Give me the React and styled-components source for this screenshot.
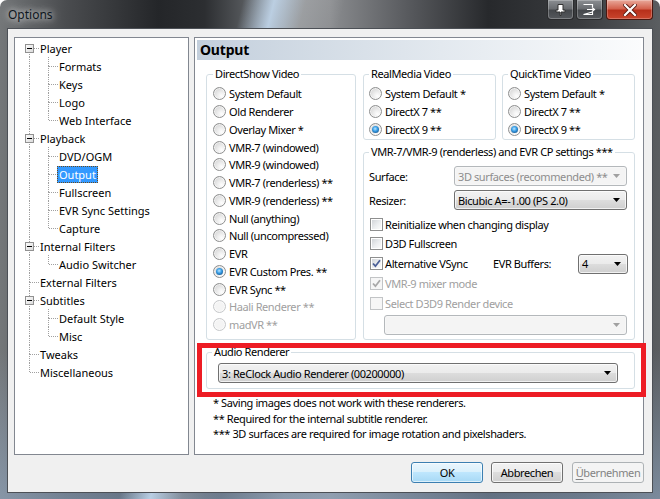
import React from 'react';
import styled, { createGlobalStyle, css } from 'styled-components';

const GlobalStyle = createGlobalStyle`
  * { box-sizing: border-box; }
  html, body { margin: 0; padding: 0; background: #fff; }
  body {
    font-family: "Noto Sans", "DejaVu Sans", sans-serif;
    font-size: 11px;
    color: #000;
  }
`;

const pages = [
  { label: 'Player', children: ['Formats', 'Keys', 'Logo', 'Web Interface'] },
  { label: 'Playback', children: ['DVD/OGM', 'Output', 'Fullscreen', 'EVR Sync Settings', 'Capture'] },
  { label: 'Internal Filters', children: ['Audio Switcher'] },
  { label: 'External Filters' },
  { label: 'Subtitles', children: ['Default Style', 'Misc'] },
  { label: 'Tweaks' },
  { label: 'Miscellaneous' },
];

const directShow = [
  { label: 'System Default' },
  { label: 'Old Renderer' },
  { label: 'Overlay Mixer *' },
  { label: 'VMR-7 (windowed)' },
  { label: 'VMR-9 (windowed)' },
  { label: 'VMR-7 (renderless) **' },
  { label: 'VMR-9 (renderless) **' },
  { label: 'Null (anything)' },
  { label: 'Null (uncompressed)' },
  { label: 'EVR' },
  { label: 'EVR Custom Pres. **', checked: true },
  { label: 'EVR Sync **' },
  { label: 'Haali Renderer **', disabled: true },
  { label: 'madVR **', disabled: true },
];

const dxChoices = [
  { label: 'System Default *' },
  { label: 'DirectX 7 **' },
  { label: 'DirectX 9 **', checked: true },
];

// tree connector: dotted lines + optional expander box
function Connector({ up, down, branch, box }) {
  const dots = { stroke: '#a0a0a0', strokeDasharray: '1 1', shapeRendering: 'crispEdges' };
  return (
    <svg width="19" height="18" viewBox="0 0 19 18" style={{ flex: 'none' }}>
      {up && <line x1="9.5" y1="0" x2="9.5" y2="9" {...dots} />}
      {down && <line x1="9.5" y1="9" x2="9.5" y2="18" {...dots} />}
      {branch && <line x1="10" y1="9.5" x2="19" y2="9.5" {...dots} />}
      {box && (
        <g shapeRendering="crispEdges">
          <defs>
            <linearGradient id="exp" x1="0" y1="0" x2="1" y2="1">
              <stop offset="0" stopColor="#ffffff" />
              <stop offset="1" stopColor="#d8d8d8" />
            </linearGradient>
          </defs>
          <rect x="5.5" y="5.5" width="8" height="8" fill="url(#exp)" stroke="#919191" />
          <line x1="7" y1="9.5" x2="12" y2="9.5" stroke="#000" />
        </g>
      )}
    </svg>
  );
}

function TreeView() {
  return (
    <Tree>
      {pages.map((node, i) => {
        const last = i === pages.length - 1;
        return (
          <React.Fragment key={node.label}>
            <TreeRow>
              <Connector up={i > 0} down={!last} branch box={!!node.children} />
              <TreeLabel>{node.label}</TreeLabel>
            </TreeRow>
            {node.children &&
              node.children.map((child, j) => (
                <TreeRow key={child}>
                  <Connector up down={!last} />
                  <Connector up down={j < node.children.length - 1} branch />
                  <TreeLabel $selected={child === 'Output'}>{child}</TreeLabel>
                </TreeRow>
              ))}
          </React.Fragment>
        );
      })}
    </Tree>
  );
}

function Radio({ label, checked, disabled }) {
  return (
    <Option $disabled={disabled}>
      <RadioMark $checked={checked} $disabled={disabled} />
      {label}
    </Option>
  );
}

function Check({ label, checked, disabled, children }) {
  return (
    <CheckRow $disabled={disabled}>
      <CheckMark $disabled={disabled}>
        {checked && (
          <svg width="9" height="9" viewBox="0 0 9 9">
            <path
              d="M1 4.5 L3.4 7.2 L8 1.2"
              fill="none"
              stroke={disabled ? '#a8a8a8' : '#4a5f97'}
              strokeWidth="1.8"
            />
          </svg>
        )}
      </CheckMark>
      <span>{label}</span>
      {children}
    </CheckRow>
  );
}

function Arrow({ disabled }) {
  return (
    <svg width="7" height="4" viewBox="0 0 7 4" style={{ flex: 'none' }}>
      <polygon points="0,0 7,0 3.5,4" fill={disabled ? '#a0a0a0' : '#000'} />
    </svg>
  );
}

function Combo({ value, width, disabled }) {
  return (
    <ComboBox $w={width} $disabled={disabled}>
      <ComboText>{value}</ComboText>
      <Arrow disabled={disabled} />
    </ComboBox>
  );
}

export default function App() {
  return (
    <>
      <GlobalStyle />
      <Window>
        <TitleBar>
          <Caption>Options</Caption>
          <CaptionButtons>
            <CaptionButton>
              <svg width="11" height="12" viewBox="0 0 11 12">
                <path d="M3 0.5 H8 V6 H10 V8 H6 V11.5 H5 V8 H1 V6 H3 Z" fill="#fff" stroke="#333" strokeWidth="1" />
              </svg>
            </CaptionButton>
            <CaptionButton>
              <svg width="13" height="11" viewBox="0 0 13 11">
                <path d="M0.5 0.5 H9.5 V3 M9.5 8 V10.5 H0.5 Z" fill="none" stroke="#fff" strokeWidth="1.2" />
                <path d="M4 5.5 H11 M9 3.5 L11.5 5.5 L9 7.5" fill="none" stroke="#fff" strokeWidth="1.2" />
              </svg>
            </CaptionButton>
            <CloseButton>
              <svg width="14" height="12" viewBox="0 0 14 12">
                <path d="M2 1 L12 11 M12 1 L2 11" stroke="#5a1a12" strokeWidth="4" strokeLinecap="square" />
                <path d="M2 1 L12 11 M12 1 L2 11" stroke="#fff" strokeWidth="2.2" strokeLinecap="square" />
              </svg>
            </CloseButton>
          </CaptionButtons>
        </TitleBar>

        <Client>
          <Panes>
            <TreeView />
            <Page>
              <PageHeader>Output</PageHeader>
              <PageBody>
                <TopGrid>
                  <Group $pad="4px 0 5px 6px">
                    <Legend>DirectShow Video</Legend>
                    {directShow.map((o) => (
                      <Radio key={o.label} {...o} />
                    ))}
                  </Group>
                  <RightColumn>
                    <Pair>
                      <Group $pad="4px 0 1px 5px">
                        <Legend>RealMedia Video</Legend>
                        {dxChoices.map((o) => (
                          <Radio key={o.label} {...o} />
                        ))}
                      </Group>
                      <Group $pad="4px 0 1px 5px">
                        <Legend>QuickTime Video</Legend>
                        {dxChoices.map((o) => (
                          <Radio key={o.label} {...o} />
                        ))}
                      </Group>
                    </Pair>
                    <Group $pad="7px 6px 4px 5px">
                      <Legend>VMR-7/VMR-9 (renderless) and EVR CP settings ***</Legend>
                      <FieldRow>
                        <FieldLabel>Surface:</FieldLabel>
                        <Combo value="3D surfaces (recommended) **" width="173px" disabled />
                      </FieldRow>
                      <FieldRow $gap="4px">
                        <FieldLabel>Resizer:</FieldLabel>
                        <Combo value="Bicubic A=-1.00 (PS 2.0)" width="173px" />
                      </FieldRow>
                      <Checks>
                        <Check label="Reinitialize when changing display" />
                        <Check label="D3D Fullscreen" />
                        <Check label="Alternative VSync" checked>
                          <BuffersLabel>EVR Buffers:</BuffersLabel>
                          <Combo value="4" width="50px" />
                        </Check>
                        <Check label="VMR-9 mixer mode" checked disabled />
                        <Check label="Select D3D9 Render device" disabled />
                      </Checks>
                      <DeviceRow>
                        <Combo value="" width="243px" disabled />
                      </DeviceRow>
                    </Group>
                  </RightColumn>
                </TopGrid>

                <AudioGroup $pad="4px 15px 5px 5px">
                  <Legend>Audio Renderer</Legend>
                  <AudioCombo>
                    <Combo value="3: ReClock Audio Renderer (00200000)" width="400px" />
                  </AudioCombo>
                </AudioGroup>

                <Notes>
                  <li>* Saving images does not work with these renderers.</li>
                  <li>** Required for the internal subtitle renderer.</li>
                  <li>*** 3D surfaces are required for image rotation and pixelshaders.</li>
                </Notes>
              </PageBody>
            </Page>
          </Panes>

          <ButtonRow>
            <DialogButton $kind="default">
              <span>OK</span>
            </DialogButton>
            <DialogButton>
              <span>Abbrechen</span>
            </DialogButton>
            <DialogButton $kind="disabled">
              <span>
                <u>Ü</u>bernehmen
              </span>
            </DialogButton>
          </ButtonRow>
        </Client>

        <Highlight />
      </Window>
    </>
  );
}

const Window = styled.div`
  position: relative;
  width: 660px;
  height: 499px;
  display: flex;
  flex-direction: column;
  padding: 0 7px 6px 7px;
  border-radius: 7px 7px 0 0;
  overflow: hidden;
  background:
    linear-gradient(104deg, rgba(255, 255, 255, 0) 31%, rgba(200, 222, 244, 0.85) 35%, rgba(255, 255, 255, 0.2) 39%, rgba(255, 255, 255, 0) 44%),
    linear-gradient(to bottom, rgba(0, 0, 0, 0) 70%, rgba(150, 175, 205, 0.55) 100%),
    linear-gradient(to right, #747779 0%, #4a4c4f 10%, #242629 24%, #2c2e31 31%, #7e8286 43%, #8a8c8f 50%, #57595d 62%, #27292c 74%, #3a3c3f 88%, #5b5e61 100%);
`;

const TitleBar = styled.div`
  display: flex;
  height: 28px;
  flex: none;
`;

const Caption = styled.div`
  margin: 7px 0 0 1px;
  font-size: 12px;
  line-height: 16px;
  color: #0d1620;
  text-shadow: 0 0 6px rgba(255, 255, 255, 0.9), 0 0 12px rgba(255, 255, 255, 0.6);
`;

const CaptionButtons = styled.div`
  display: flex;
  margin-left: auto;
  gap: 2px;
`;

const CaptionButton = styled.div`
  width: 27px;
  height: 20px;
  display: grid;
  place-items: center;
  border: 1px solid #2a2b2d;
  border-top: none;
  border-radius: 0 0 4px 4px;
  background: linear-gradient(#8b8e92 0%, #6a6d71 45%, #45484c 55%, #55585c 100%);
  box-shadow: inset 0 0 0 1px rgba(255, 255, 255, 0.25);
`;

const CloseButton = styled(CaptionButton)`
  width: 47px;
  margin-left: 1px;
  background: linear-gradient(#e9a99b 0%, #d4634f 45%, #b8301b 55%, #c9452d 100%);
  border-color: #4a1810;
`;

const Client = styled.div`
  flex: 1;
  display: flex;
  flex-direction: column;
  gap: 7px;
  padding: 8px 8px 9px 6px;
  background: #f0f0f0;
  border: 1px solid #4c5056;
`;

const Panes = styled.div`
  display: flex;
  gap: 5px;
  height: 418px;
`;

const Tree = styled.div`
  width: 175px;
  height: 100%;
  padding: 1px 0 0 5px;
  background: #fff;
  border: 1px solid #828790;
`;

const TreeRow = styled.div`
  display: flex;
  align-items: center;
  height: 18px;
`;

const TreeLabel = styled.span`
  display: flex;
  align-items: center;
  height: 17px;
  margin-left: -1px;
  padding: 0 2px;
  white-space: nowrap;
  ${(p) =>
    p.$selected &&
    css`
      background: #3399ff;
      color: #fff;
      outline: 1px dotted #6b4a1c;
      outline-offset: -1px;
    `}
`;

const Page = styled.div`
  width: 450px;
  height: 100%;
  display: flex;
  flex-direction: column;
  padding: 2px;
  background: #fff;
  border: 1px solid #828790;
  letter-spacing: -0.4px;
`;

const PageHeader = styled.div`
  height: 20px;
  padding-left: 3px;
  font-size: 14px;
  font-weight: 700;
  line-height: 20px;
  letter-spacing: -0.2px;
  background: linear-gradient(to right, #c3cfdc 0%, #e3e9ef 55%, #fbfcfd 100%);
`;

const PageBody = styled.div`
  padding: 7px 6px 0 9px;
`;

const TopGrid = styled.div`
  display: grid;
  grid-template-columns: 150px 272px;
  column-gap: 7px;
`;

const RightColumn = styled.div`
  display: flex;
  flex-direction: column;
  gap: 5px;
`;

const Pair = styled.div`
  display: grid;
  grid-template-columns: 133px 133px;
  column-gap: 6px;
`;

const Group = styled.fieldset`
  margin: 0;
  min-width: 0;
  padding: ${(p) => p.$pad};
  border: 1px solid #d5dfe5;
  border-radius: 3px;
`;

const Legend = styled.legend`
  padding: 0 2px;
  line-height: 14px;
  white-space: nowrap;
`;

const Option = styled.div`
  display: flex;
  align-items: center;
  gap: 3px;
  height: 17.75px;
  white-space: nowrap;
  color: ${(p) => (p.$disabled ? '#a0a0a0' : '#000')};
`;

const RadioMark = styled.span`
  flex: none;
  width: 13px;
  height: 13px;
  display: grid;
  place-items: center;
  border-radius: 50%;
  border: 1px solid ${(p) => (p.$disabled ? '#c6c8ca' : '#8e8f8f')};
  background: ${(p) =>
    p.$disabled
      ? '#f4f4f4'
      : 'radial-gradient(circle at 68% 72%, #fefefe 0%, #f0f0f0 30%, #d3d3d3 85%)'};
  box-shadow: inset 0 0 0 1px ${(p) => (p.$disabled ? '#fafafa' : 'rgba(255,255,255,0.6)')};

  &::after {
    content: '';
    display: ${(p) => (p.$checked ? 'block' : 'none')};
    width: 7px;
    height: 7px;
    border-radius: 50%;
    background: radial-gradient(circle at 45% 40%, #bfe6ff 0%, #3aa0e8 40%, #175a94 80%, #0e3a66 100%);
  }
`;

const FieldRow = styled.div`
  display: flex;
  align-items: center;
  height: 20px;
  margin-top: ${(p) => p.$gap || '0'};
`;

const FieldLabel = styled.span`
  width: 85px;
  flex: none;
`;

const ComboBox = styled.div`
  flex: none;
  display: flex;
  align-items: center;
  gap: 4px;
  width: ${(p) => p.$w};
  height: 20px;
  padding: 0 6px 0 3px;
  border: 1px solid ${(p) => (p.$disabled ? '#b4b8bb' : '#707070')};
  border-radius: 3px;
  color: ${(p) => (p.$disabled ? '#8d8d8d' : '#000')};
  background: ${(p) =>
    p.$disabled ? '#f4f4f4' : 'linear-gradient(#f2f2f2 0%, #ebebeb 49%, #dddddd 50%, #cfcfcf 100%)'};
  box-shadow: inset 0 0 0 1px ${(p) => (p.$disabled ? '#f7f7f7' : 'rgba(255,255,255,0.7)')};
`;

const ComboText = styled.span`
  flex: 1;
  white-space: nowrap;
  overflow: hidden;
`;

const Checks = styled.div`
  margin-top: 4px;
`;

const CheckRow = styled.div`
  display: flex;
  align-items: center;
  gap: 2px;
  height: 19.75px;
  padding-left: 1px;
  white-space: nowrap;
  color: ${(p) => (p.$disabled ? '#a0a0a0' : '#000')};
`;

const CheckMark = styled.span`
  flex: none;
  width: 13px;
  height: 13px;
  display: grid;
  place-items: center;
  border: 1px solid ${(p) => (p.$disabled ? '#c2c4c6' : '#8e8f8f')};
  padding: 1px;
  background: ${(p) =>
    p.$disabled
      ? '#f6f6f6'
      : 'linear-gradient(135deg, #d2d5d9 0%, #eceef0 55%, #fbfbfb 100%) content-box, #fff'};
`;

const BuffersLabel = styled.span`
  margin-left: auto;
  width: 83px;
`;

const DeviceRow = styled.div`
  margin: 2px 0 0 15px;
`;

const AudioGroup = styled(Group)`
  margin-top: 5px;
`;

const AudioCombo = styled.div`
  padding-left: 6px;
`;

const Notes = styled.ul`
  list-style: none;
  margin: 6px 0 0 7px;
  padding: 0;
  line-height: 15.5px;
  white-space: nowrap;
`;

const ButtonRow = styled.div`
  display: flex;
  justify-content: flex-end;
  gap: 8px;
  height: 21px;
  letter-spacing: -0.4px;
`;

const DialogButton = styled.div`
  width: 72px;
  height: 21px;
  display: flex;
  align-items: center;
  justify-content: center;
  border-radius: 3px;
  border: 1px solid #707070;
  background: linear-gradient(#f2f2f2 0%, #ebebeb 49%, #dddddd 50%, #cfcfcf 100%);
  box-shadow: inset 0 0 0 1px rgba(255, 255, 255, 0.75);
  white-space: nowrap;

  ${(p) =>
    p.$kind === 'default' &&
    css`
      border-color: #3c7fb1;
      background: linear-gradient(#eaf6fd 0%, #d9f0fc 49%, #bee6fd 50%, #a7d9f5 100%);
      box-shadow: inset 0 0 0 1px rgba(255, 255, 255, 0.6);
    `}
  ${(p) =>
    p.$kind === 'disabled' &&
    css`
      margin-left: 1px;
      border-color: #adb2b5;
      background: #f4f4f4;
      color: #838383;
      box-shadow: none;
    `}

  u { text-decoration-thickness: 1px; text-underline-offset: 2px; }
`;

// red annotation frame around the audio renderer section
const Highlight = styled.div`
  position: absolute;
  left: 197px;
  top: 343px;
  width: 449px;
  height: 54px;
  border: 5px solid #ed1c24;
  pointer-events: none;
`;
